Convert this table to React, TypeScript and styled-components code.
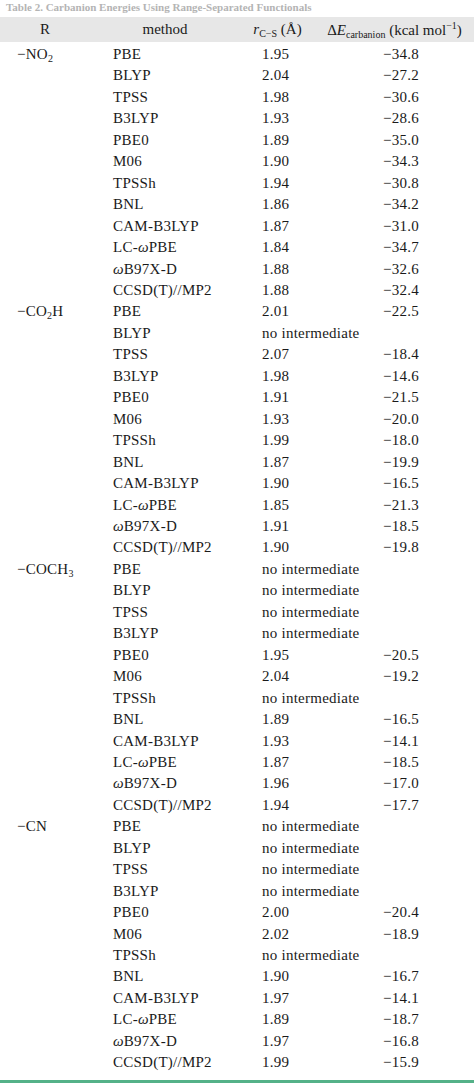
import React from "react";
import styled, { createGlobalStyle } from "styled-components";

const GlobalStyle = createGlobalStyle`
  html, body {
    margin: 0;
    padding: 0;
    background: #ffffff;
  }
  body {
    font-family: "Liberation Serif", "DejaVu Serif", serif;
    color: #1a1a1a;
  }
`;

const Page = styled.div`
  width: 474px;
  height: 1086px;
  overflow: hidden;
  background: #ffffff;
`;

const Caption = styled.div`
  height: 17px;
  padding-left: 6px;
`;

const CaptionText = styled.div`
  padding-top: 1px;
  font-size: 11px;
  font-weight: bold;
  line-height: 13px;
  color: #b4b4b4;
  white-space: nowrap;
`;

const Header = styled.div`
  display: grid;
  grid-template-columns: 90px 150px 75px 159px;
  height: 25px;
  align-items: center;
  background: #e7e7e7;
  font-size: 15px;
`;

const HeadCell = styled.div`
  text-align: center;
  white-space: nowrap;
`;

const Body = styled.div`
  padding-top: 2px;
`;

const Row = styled.div`
  display: grid;
  grid-template-columns: 113px 149px 121px 91px;
  height: 21.46px;
  line-height: 21.46px;
  font-size: 15px;
  letter-spacing: 0.25px;
  white-space: nowrap;
`;

const Cell = styled.div<{ $pad?: number }>`
  padding-left: ${(p) => p.$pad ?? 0}px;
`;

const Wide = styled.div`
  grid-column: 3 / span 2;
`;

const BottomRule = styled.div`
  margin-top: 6px;
  height: 3px;
  background: #54b188;
`;

const Sub = styled.sub`
  font-size: 10px;
  vertical-align: -3px;
`;

const Sup = styled.sup`
  font-size: 10px;
  vertical-align: 6px;
`;

const It = styled.i``;

const methods = [
  "PBE",
  "BLYP",
  "TPSS",
  "B3LYP",
  "PBE0",
  "M06",
  "TPSSh",
  "BNL",
  "CAM-B3LYP",
  "LC-ωPBE",
  "ωB97X-D",
  "CCSD(T)//MP2",
];

const groups: { label: React.ReactNode; rows: [string | null, string | null][] }[] = [
  {
    label: (
      <>
        −NO<Sub>2</Sub>
      </>
    ),
    rows: [
      ["1.95", "−34.8"],
      ["2.04", "−27.2"],
      ["1.98", "−30.6"],
      ["1.93", "−28.6"],
      ["1.89", "−35.0"],
      ["1.90", "−34.3"],
      ["1.94", "−30.8"],
      ["1.86", "−34.2"],
      ["1.87", "−31.0"],
      ["1.84", "−34.7"],
      ["1.88", "−32.6"],
      ["1.88", "−32.4"],
    ],
  },
  {
    label: (
      <>
        −CO<Sub>2</Sub>H
      </>
    ),
    rows: [
      ["2.01", "−22.5"],
      [null, null],
      ["2.07", "−18.4"],
      ["1.98", "−14.6"],
      ["1.91", "−21.5"],
      ["1.93", "−20.0"],
      ["1.99", "−18.0"],
      ["1.87", "−19.9"],
      ["1.90", "−16.5"],
      ["1.85", "−21.3"],
      ["1.91", "−18.5"],
      ["1.90", "−19.8"],
    ],
  },
  {
    label: (
      <>
        −COCH<Sub>3</Sub>
      </>
    ),
    rows: [
      [null, null],
      [null, null],
      [null, null],
      [null, null],
      ["1.95", "−20.5"],
      ["2.04", "−19.2"],
      [null, null],
      ["1.89", "−16.5"],
      ["1.93", "−14.1"],
      ["1.87", "−18.5"],
      ["1.96", "−17.0"],
      ["1.94", "−17.7"],
    ],
  },
  {
    label: <>−CN</>,
    rows: [
      [null, null],
      [null, null],
      [null, null],
      [null, null],
      ["2.00", "−20.4"],
      ["2.02", "−18.9"],
      [null, null],
      ["1.90", "−16.7"],
      ["1.97", "−14.1"],
      ["1.89", "−18.7"],
      ["1.97", "−16.8"],
      ["1.99", "−15.9"],
    ],
  },
];

const MethodName: React.FC<{ name: string }> = ({ name }) => {
  if (!name.includes("ω")) return <>{name}</>;
  const [a, b] = name.split("ω");
  return (
    <>
      {a}
      <It>ω</It>
      {b}
    </>
  );
};

export default function App() {
  return (
    <Page>
      <GlobalStyle />
      <Caption>
        <CaptionText>Table 2. Carbanion Energies Using Range-Separated Functionals</CaptionText>
      </Caption>
      <Header>
        <HeadCell>R</HeadCell>
        <HeadCell>method</HeadCell>
        <HeadCell>
          <It>r</It>
          <Sub>C−S</Sub> (Å)
        </HeadCell>
        <HeadCell>
          Δ<It>E</It>
          <Sub>carbanion</Sub> (kcal mol<Sup>−1</Sup>)
        </HeadCell>
      </Header>
      <Body>
        {groups.map((g, gi) =>
          g.rows.map(([r, e], i) => (
            <Row key={`${gi}-${i}`}>
              <Cell $pad={17}>{i === 0 ? g.label : null}</Cell>
              <Cell>
                <MethodName name={methods[i]} />
              </Cell>
              {r === null ? (
                <Wide>no intermediate</Wide>
              ) : (
                <>
                  <Cell>{r}</Cell>
                  <Cell>{e}</Cell>
                </>
              )}
            </Row>
          ))
        )}
      </Body>
      <BottomRule />
    </Page>
  );
}
